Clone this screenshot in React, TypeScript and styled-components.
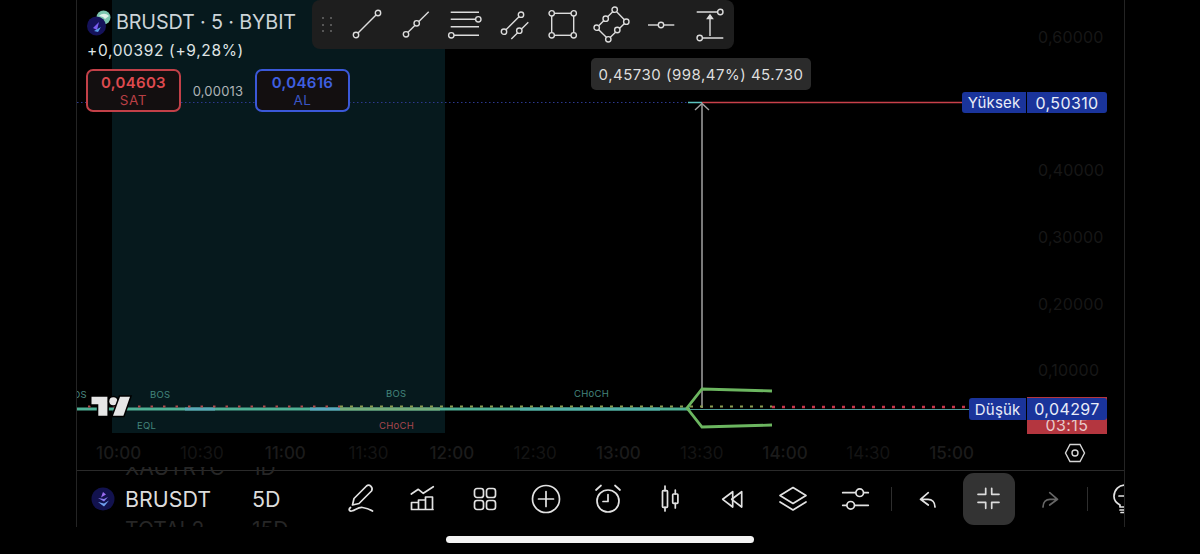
import React from "react";
import styled, { createGlobalStyle } from "styled-components";

const Global = createGlobalStyle`
  html, body { margin: 0; padding: 0; background: #000; }
  body { font-family: Inter, "Noto Sans", "Liberation Sans", sans-serif; overflow: hidden; }
  * { box-sizing: border-box; }
`;

const Page = styled.div`
  width: 1200px;
  height: 554px;
  background: #000;
  position: relative;
  padding-left: 76px;
`;

const Frame = styled.div`
  width: 1049px;
  height: 527px;
  border-left: 1px solid #242424;
  border-right: 1px solid #242424;
  overflow: hidden;
  display: flex;
  flex-direction: column;
`;

const Chart = styled.div`
  position: relative;
  height: 433px;
  flex: none;
`;

const Drawing = styled.svg`
  position: absolute;
  inset: 0;
  display: block;
`;

const Header = styled.div`
  position: absolute;
  left: 9px;
  top: 7px;
  display: flex;
  flex-direction: column;
`;

const TitleRow = styled.div`
  display: flex;
  align-items: center;
  height: 30px;
  gap: 5px;
  margin-left: 1px;
  color: #ccd4d8;
  font-size: 19.8px;
  letter-spacing: -0.15px;
`;

const Change = styled.div`
  margin-top: 4px;
  margin-left: 1px;
  line-height: 20px;
  font-size: 15.5px;
  letter-spacing: 0.65px;
  color: #dfe3e4;
`;

const QuoteRow = styled.div`
  margin-top: 8px;
  display: flex;
  align-items: center;
`;

const Quote = styled.div<{ $c: string; $dim: string }>`
  width: 95px;
  height: 43px;
  border: 2px solid ${(p) => p.$dim};
  border-radius: 7px;
  background: #130f10;
  display: flex;
  flex-direction: column;
  align-items: center;
  justify-content: center;
  color: ${(p) => p.$c};
  font-size: 15px;
  font-weight: 600;
  line-height: 19px;
  letter-spacing: 0.3px;
`;

const QuoteSide = styled.span<{ $c: string }>`
  font-size: 13.5px;
  font-weight: 400;
  line-height: 17px;
  letter-spacing: 0.6px;
  color: ${(p) => p.$c};
`;

const Spread = styled.div`
  width: 74px;
  text-align: center;
  font-size: 13px;
  letter-spacing: 0.2px;
  color: #aeb4b6;
`;

const DrawBar = styled.div`
  position: absolute;
  left: 235px;
  top: 0;
  width: 422px;
  height: 49px;
  background: #1e1e1e;
  border-radius: 8px;
  display: flex;
  align-items: center;
  padding-left: 39px;
  gap: 17px;
`;

const Grip = styled.div`
  position: absolute;
  left: 10px;
  top: 17px;
  display: grid;
  grid-template-columns: 2px 2px;
  grid-auto-rows: 2px;
  column-gap: 6px;
  row-gap: 4.5px;
`;

const GripDot = styled.i`
  display: block;
  width: 2px;
  height: 2px;
  background: #565656;
`;

const ToolIcon = styled.svg`
  flex: none;
  width: 32px;
  height: 32px;
  overflow: visible;
  fill: none;
  stroke: #dcdcdc;
  stroke-width: 1.4;
`;

const Tooltip = styled.div`
  position: absolute;
  left: 514px;
  top: 58px;
  width: 220px;
  height: 32px;
  border-radius: 5px;
  background: #2b2b2b;
  color: #dedede;
  font-size: 15px;
  letter-spacing: 0.5px;
  display: flex;
  align-items: center;
  justify-content: center;
  white-space: nowrap;
`;

const AxisPrice = styled.span<{ $y: number }>`
  position: absolute;
  left: 961px;
  top: ${(p) => p.$y - 10}px;
  line-height: 20px;
  font-size: 16px;
  letter-spacing: 0.2px;
  color: #171717;
`;

const Marker = styled.span<{ $x: number; $y: number; $c: string }>`
  position: absolute;
  left: ${(p) => p.$x}px;
  top: ${(p) => p.$y - 6}px;
  line-height: 12px;
  font-size: 9.5px;
  letter-spacing: 0.3px;
  color: ${(p) => p.$c};
  white-space: nowrap;
`;

const ClippedMarker = styled.div`
  position: absolute;
  left: 0;
  top: 389px;
  width: 10px;
  height: 12px;
  overflow: hidden;
  direction: rtl;
  line-height: 12px;
  font-size: 9.5px;
  letter-spacing: 0.3px;
  color: #4a8a80;
`;

const PriceTag = styled.div<{ $y: number; $h: number }>`
  position: absolute;
  right: 17px;
  top: ${(p) => p.$y}px;
  height: ${(p) => p.$h}px;
  display: flex;
  gap: 1px;
  font-size: 16px;
  letter-spacing: 0.4px;
  color: #e9edf8;
`;

const TagName = styled.div`
  background: #1a349b;
  border-radius: 3px 0 0 3px;
  padding: 0 5.5px;
  display: flex;
  align-items: center;
  font-size: 15px;
  letter-spacing: 0.2px;
`;

const TagValue = styled.div`
  width: 80px;
  background: #1a349b;
  border-radius: 0 3px 3px 0;
  display: flex;
  align-items: center;
  justify-content: center;
`;

const Countdown = styled.div`
  position: absolute;
  right: 17px;
  top: 397px;
  width: 80px;
  height: 37px;
  background: #b4363f;
  color: #e8c9ca;
  font-size: 16px;
  letter-spacing: 0.4px;
  line-height: 18px;
  padding-top: 19px;
  text-align: center;
`;

const TimeAxis = styled.div`
  height: 37px;
  flex: none;
  padding-top: 3px;
  display: flex;
  align-items: center;
  position: relative;
`;

const TimeLabel = styled.span<{ $hour: boolean }>`
  width: 83.3px;
  flex: none;
  text-align: center;
  font-size: 17px;
  font-weight: ${(p) => (p.$hour ? 500 : 400)};
  color: ${(p) => (p.$hour ? "#1b1b1b" : "#141414")};
`;

const AxisSettings = styled.svg`
  position: absolute;
  left: 987px;
  top: 9px;
  width: 22px;
  height: 22px;
  fill: none;
  stroke: #d6d6d6;
  stroke-width: 1.4;
`;

const Toolbar = styled.div`
  position: relative;
  flex: 1;
  border-top: 1px solid #2a2a2a;
  display: flex;
  align-items: center;
  padding-left: 15px;
`;

const GhostClip = styled.div<{ $y: number; $h: number }>`
  position: absolute;
  left: 48px;
  top: ${(p) => p.$y}px;
  height: ${(p) => p.$h}px;
  overflow: hidden;
`;

const Ghost = styled.div<{ $shift: number }>`
  display: flex;
  margin-top: ${(p) => p.$shift}px;
  font-size: 21px;
  line-height: 24px;
  color: #262626;
`;

const GhostName = styled.span`
  width: 127px;
`;

const Symbol = styled.div`
  width: 243px;
  flex: none;
  display: flex;
  align-items: center;
  font-size: 21.4px;
  color: #dcdcdc;
  position: relative;
  z-index: 1;
`;

const SymbolLogo = styled.svg`
  width: 24px;
  height: 24px;
  flex: none;
  margin-right: 10px;
  margin-left: -1px;
`;

const SymbolName = styled.span`
  width: 127px;
  flex: none;
`;

const ButtonGroup = styled.div<{ $gap: number }>`
  display: flex;
  align-items: center;
  gap: ${(p) => p.$gap}px;
  flex: none;
`;

const IconButton = styled.div<{ $active?: boolean }>`
  width: 52px;
  height: 52px;
  flex: none;
  border-radius: 11px;
  display: flex;
  align-items: center;
  justify-content: center;
  margin-top: ${(p) => (p.$active ? "-1px" : "0")};
  background: ${(p) => (p.$active ? "#333333" : "transparent")};
`;

const BarIcon = styled.svg<{ $c?: string }>`
  width: 32px;
  height: 32px;
  fill: none;
  stroke: ${(p) => p.$c || "#e2e2e2"};
  stroke-width: 1.7;
  stroke-linecap: round;
  stroke-linejoin: round;
  overflow: visible;
`;

const Divider = styled.div<{ $r: number }>`
  width: 1px;
  height: 24px;
  flex: none;
  background: #2e2e2e;
  margin: 0 ${(p) => p.$r}px 0 10px;
`;

const HomeBar = styled.div`
  position: absolute;
  left: 446px;
  top: 536px;
  width: 308px;
  height: 7px;
  border-radius: 4px;
  background: #f4f4f4;
`;

const Handle = ({ x, y }: { x: number; y: number }) => <circle cx={x} cy={y} r={2.7} fill="#1e1e1e" />;

const times = ["10:00", "10:30", "11:00", "11:30", "12:00", "12:30", "13:00", "13:30", "14:00", "14:30", "15:00"];
const prices: [string, number][] = [["0,60000", 37], ["0,40000", 170], ["0,30000", 237], ["0,20000", 304], ["0,10000", 370]];

export default function App() {
  return (
    <>
      <Global />
      <Page>
        <Frame>
          <Chart>
            <Drawing width={1047} height={433} viewBox="77 0 1047 433">
              <rect x={112} y={0} width={333} height={433} fill="#06191d" />
              <line x1={77} y1={102.5} x2={688} y2={102.5} stroke="#2c3990" strokeWidth={1.2} strokeDasharray="1.5 2.5" />
              <line x1={688} y1={102.5} x2={702} y2={102.5} stroke="#5cc4c0" strokeWidth={1.5} />
              <line x1={702} y1={102.5} x2={965} y2={102.5} stroke="#c8404a" strokeWidth={1.5} />
              <line x1={702} y1={104} x2={702} y2={408} stroke="#a2a2a2" strokeWidth={1.5} />
              <path d="M695 110 L702 103.5 L709 110" fill="none" stroke="#a2a2a2" strokeWidth={1.4} />
              <line x1={77} y1={409} x2={690} y2={409} stroke="#4fb095" strokeWidth={3} />
              <line x1={185} y1={409} x2={215} y2={409} stroke="#58a7b8" strokeWidth={3} />
              <line x1={310} y1={409} x2={340} y2={409} stroke="#5aa8c0" strokeWidth={3} />
              <line x1={340} y1={409} x2={440} y2={409} stroke="#74ac7c" strokeWidth={3} />
              <line x1={520} y1={409} x2={660} y2={409} stroke="#52b0a8" strokeWidth={3} />
              <line x1={690} y1={409.5} x2={972} y2={409.5} stroke="#4d9c9a" strokeWidth={1.2} />
              <line x1={88} y1={406.5} x2={340} y2={406.5} stroke="#b04a4c" strokeWidth={2} strokeDasharray="2.5 10" />
              <line x1={340} y1={406.5} x2={772} y2={406.5} stroke="#8a9a50" strokeWidth={2} strokeDasharray="3 7" />
              <line x1={772} y1={407} x2={972} y2={407} stroke="#c8354a" strokeWidth={2.5} strokeDasharray="3 7" />
              <path d="M772 391 L702 389 L687 408 L702 427 L772 425" fill="none" stroke="#6cb660" strokeWidth={2.8} />
              <g fill="#e6e6e6" stroke="#000" strokeWidth={3} paintOrder="stroke">
                <path d="M91.500 396.700H107.400V415.800H98.300V404.200H91.500Z" />
                <circle cx={113.3} cy={401.2} r={4} />
                <path d="M120 396.700H130L123.400 415.800H113Z" />
              </g>
            </Drawing>

            <ClippedMarker>BOS</ClippedMarker>
            <Marker $x={73} $y={395} $c="#43857c">BOS</Marker>
            <Marker $x={309} $y={394} $c="#43857c">BOS</Marker>
            <Marker $x={60} $y={426} $c="#43857c">EQL</Marker>
            <Marker $x={302} $y={426} $c="#a8474e">CHoCH</Marker>
            <Marker $x={497} $y={394} $c="#43857c">CHoCH</Marker>

            {prices.map(([t, y]) => (
              <AxisPrice key={t} $y={y}>{t}</AxisPrice>
            ))}

            <Header>
              <TitleRow>
                <svg width="24" height="30" viewBox="0 0 24 30">
                  <circle cx="16.5" cy="10.5" r="7" fill="#7cc6ae" />
                  <path d="M12 9c3-3 7-3 10 0l-4 3-2-2z" fill="#dff2ea" />
                  <circle cx="9.5" cy="19" r="9.5" fill="#15125a" />
                  <path d="M6 21l6-6-2 8z" fill="#7a5cf0" />
                  <path d="M7 24l7-4-3 5z" fill="#5aa0e8" />
                </svg>
                <span>BRUSDT · 5 · BYBIT</span>
              </TitleRow>
              <Change>+0,00392 (+9,28%)</Change>
              <QuoteRow>
                <Quote $c="#de4a4f" $dim="#c24048">
                  0,04603
                  <QuoteSide $c="#b83f45">SAT</QuoteSide>
                </Quote>
                <Spread>0,00013</Spread>
                <Quote $c="#3f5fe0" $dim="#3b58d8">
                  0,04616
                  <QuoteSide $c="#3a55c4">AL</QuoteSide>
                </Quote>
              </QuoteRow>
            </Header>

            <DrawBar>
              <Grip>
                {Array.from({ length: 6 }).map((_, i) => (
                  <GripDot key={i} />
                ))}
              </Grip>
              <ToolIcon viewBox="0 0 32 32">
                <line x1="5" y1="26" x2="27" y2="4" />
                <Handle x={5} y={26} />
                <Handle x={27} y={4} />
              </ToolIcon>
              <ToolIcon viewBox="0 0 32 32">
                <line x1="6" y1="25.3" x2="28.7" y2="2.7" />
                <Handle x={6} y={25.3} />
                <Handle x={16.7} y={14.3} />
              </ToolIcon>
              <ToolIcon viewBox="0 0 32 32">
                <path d="M1.700 3.300H30M1.700 10.300H27M1.700 17.700H30M5 26.300H30" />
                <Handle x={29.3} y={10.3} />
                <Handle x={2.3} y={26.3} />
              </ToolIcon>
              <ToolIcon viewBox="0 0 32 32">
                <path d="M6 22.700L23 5.700M13.300 30L30.300 13.300" />
                <Handle x={6} y={22.7} />
                <Handle x={23} y={5.7} />
                <Handle x={21.3} y={21.7} />
              </ToolIcon>
              <ToolIcon viewBox="0 0 32 32">
                <rect x="4.7" y="4.3" width="22" height="22" />
                <Handle x={4.7} y={4.3} />
                <Handle x={26.7} y={4.3} />
                <Handle x={4.7} y={26.3} />
                <Handle x={26.7} y={26.3} />
              </ToolIcon>
              <ToolIcon viewBox="0 0 32 32">
                <path d="M18.700 .7L30.300 12.700L12.300 30.300L.7 18.700Z" />
                <Handle x={18.7} y={0.7} />
                <Handle x={30.3} y={12.7} />
                <Handle x={21.3} y={21} />
                <Handle x={12.3} y={30.3} />
                <Handle x={0.7} y={18.7} />
                <Handle x={9.7} y={9.7} />
              </ToolIcon>
              <ToolIcon viewBox="0 0 32 32">
                <line x1="3" y1="16" x2="29.3" y2="16" />
                <Handle x={16} y={16} />
              </ToolIcon>
              <ToolIcon viewBox="0 0 32 32">
                <path d="M2.700 3H23.300M8.700 29H29.300M16 27V9" />
                <path d="M13.500 9.500L16 6L18.500 9.500Z" fill="#dcdcdc" />
                <Handle x={26.3} y={3} />
                <Handle x={5.7} y={29} />
              </ToolIcon>
            </DrawBar>

            <Tooltip>0,45730 (998,47%) 45.730</Tooltip>

            <PriceTag $y={92} $h={21}>
              <TagName>Yüksek</TagName>
              <TagValue>0,50310</TagValue>
            </PriceTag>

            <Countdown>03:15</Countdown>
            <PriceTag $y={398} $h={22}>
              <TagName>Düşük</TagName>
              <TagValue>0,04297</TagValue>
            </PriceTag>
          </Chart>

          <TimeAxis>
            {times.map((t) => (
              <TimeLabel key={t} $hour={t.endsWith(":00")}>{t}</TimeLabel>
            ))}
            <AxisSettings viewBox="0 0 22 22">
              <path d="M6 2.500H16L20.500 11L16 19.500H6L1.500 11Z" />
              <circle cx="11" cy="11" r="3" />
            </AxisSettings>
          </TimeAxis>

          <Toolbar>
            <GhostClip $y={-4} $h={9}>
              <Ghost $shift={-11}>
                <GhostName>XAUTRYC</GhostName>
                <span>1D</span>
              </Ghost>
            </GhostClip>
            <GhostClip $y={47} $h={9}>
              <Ghost $shift={0}>
                <GhostName>TOTAL2</GhostName>
                <span>15D</span>
              </Ghost>
            </GhostClip>
            <Symbol>
              <SymbolLogo viewBox="0 0 24 24">
                <circle cx="12" cy="12" r="11.5" fill="#12124e" />
                <path d="M12 5l3 2.500-5 3z" fill="#9a6cf0" />
                <path d="M7 11l6 1 4-2-4 4.500z" fill="#8a7cf0" />
                <path d="M7 15l6 1.500 5-3-5 6z" fill="#6fa0ee" />
              </SymbolLogo>
              <SymbolName>BRUSDT</SymbolName>
              <span>5D</span>
            </Symbol>

            <ButtonGroup $gap={9.75}>
              <IconButton>
                <BarIcon viewBox="0 0 32 32">
                  <path d="M7.500 22L9 15.500L21.500 3Q23.700 1.300 26 3.400Q28 5.800 26.500 8L14 20.500Z" />
                  <path d="M5.500 24.500c-2.500 2-1 4.300 2 3.300 3-1 6-3.800 10-3.300 3 .4 6 1 10 3.500" />
                </BarIcon>
              </IconButton>
              <IconButton>
                <BarIcon viewBox="0 0 32 32">
                  <path d="M4.300 11L11.300 6.300L16.300 10.300L26.300 3.700" />
                  <path d="M4.500 26.500H26M4.500 26.500V19.500H11.500V26.500M11.500 26.500V17H18.500V26.500M18.500 26.500V14H25.500V26.500" />
                </BarIcon>
              </IconButton>
              <IconButton>
                <BarIcon viewBox="0 0 32 32">
                  <rect x="5.5" y="5.5" width="9" height="9" rx="2.5" />
                  <rect x="17.5" y="5.5" width="9" height="9" rx="2.5" />
                  <rect x="5.5" y="17.5" width="9" height="9" rx="2.5" />
                  <rect x="17.5" y="17.5" width="9" height="9" rx="2.5" />
                </BarIcon>
              </IconButton>
              <IconButton>
                <BarIcon viewBox="0 0 32 32">
                  <circle cx="16" cy="16" r="13.5" />
                  <path d="M16 8.500V23.500M8.500 16H23.500" />
                </BarIcon>
              </IconButton>
              <IconButton>
                <BarIcon viewBox="0 0 32 32">
                  <circle cx="16" cy="18" r="11" />
                  <path d="M16 11.500V18.500H11M4 7L9 2.500M28 7L23 2.500" />
                </BarIcon>
              </IconButton>
              <IconButton>
                <BarIcon viewBox="0 0 32 32">
                  <path d="M11 3V7.700M11 24.300V28M21.300 7V11M21.300 20.300V25" />
                  <rect x="8.5" y="7.7" width="5" height="16.6" rx="0.8" />
                  <rect x="18.7" y="11" width="5.2" height="9.3" rx="0.8" />
                </BarIcon>
              </IconButton>
              <IconButton>
                <BarIcon viewBox="0 0 32 32">
                  <path d="M16.700 8.700L6.700 16.300L16.700 24Z" />
                  <path d="M25.700 8.700L15.700 16.300L25.700 24Z" />
                </BarIcon>
              </IconButton>
              <IconButton>
                <BarIcon viewBox="0 0 32 32">
                  <path d="M3 12.500L16 4.500L29 12.500L16 20.500Z" />
                  <path d="M3 19L16 27L29 19" />
                </BarIcon>
              </IconButton>
              <IconButton>
                <BarIcon viewBox="0 0 32 32">
                  <path d="M3.700 9.700H29.300M3.700 22.300H29.300" />
                  <circle cx="20.7" cy="9.7" r="3.8" fill="#000" />
                  <circle cx="11.7" cy="22.3" r="3.8" fill="#000" />
                </BarIcon>
              </IconButton>
            </ButtonGroup>

            <Divider $r={9} />

            <ButtonGroup $gap={10}>
              <IconButton>
                <BarIcon viewBox="0 0 32 32">
                  <path d="M17.300 9.700L9.500 16.300L17.300 22M9.500 16.300H17C21 16.300 24 19 24 24" />
                </BarIcon>
              </IconButton>
              <IconButton $active>
                <BarIcon viewBox="0 0 32 32" $c="#dcdcdc">
                  <path d="M5 11.300H12.700V5.300M18.700 5.300V11.300H26M5 19.300H12.700V25.300M18.700 25.300V19.300H26" />
                </BarIcon>
              </IconButton>
              <IconButton>
                <BarIcon viewBox="0 0 32 32" $c="#666666">
                  <path d="M14.700 9.700L22.500 16.300L14.700 22M22.500 16.300H15C11 16.300 8 19 8 24" />
                </BarIcon>
              </IconButton>
            </ButtonGroup>

            <Divider $r={11} />

            <IconButton>
              <BarIcon viewBox="0 0 32 32">
                <path d="M11 22C6.500 19.500 4.800 16.500 5 13C5.300 6.500 10 2 16 2C22 2 26.700 6.500 27 13C27.200 16.500 25.500 19.500 21 22V24H11Z" />
                <path d="M10 13H15M11 27H21M12 29.500H20" />
              </BarIcon>
            </IconButton>
          </Toolbar>
        </Frame>
        <HomeBar />
      </Page>
    </>
  );
}
